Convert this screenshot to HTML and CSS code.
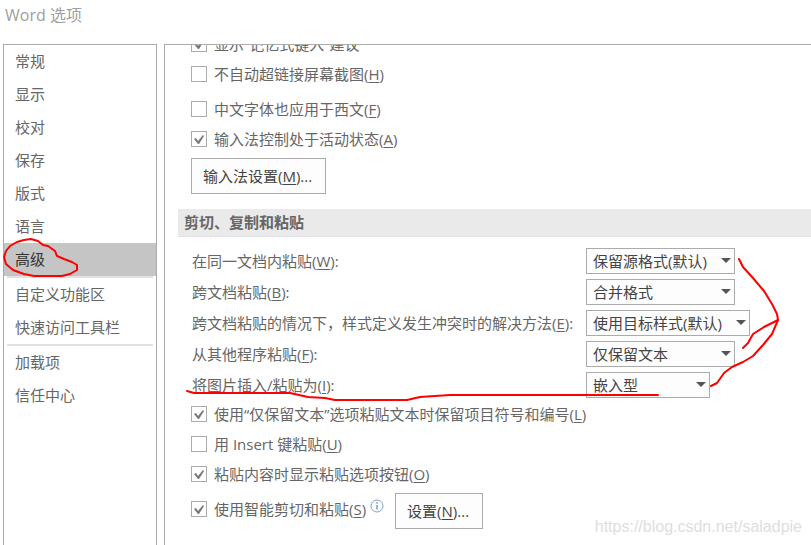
FILE: index.html
```
<!DOCTYPE html>
<html lang="zh-CN">
<head>
    <meta charset="UTF-8">
    <meta name="viewport" content="width=device-width, initial-scale=1.0">
    <title>Word 选项</title>
    <link rel="stylesheet" href="styles.css">
</head>
<body>

    <h1 class="title">Word 选项</h1>

    <div class="dialog">
        <nav class="sidebar">
            <button type="button" class="nav-item">常规</button>
            <button type="button" class="nav-item">显示</button>
            <button type="button" class="nav-item">校对</button>
            <button type="button" class="nav-item">保存</button>
            <button type="button" class="nav-item">版式</button>
            <button type="button" class="nav-item">语言</button>
            <button type="button" class="nav-item active">高级</button>
            <hr class="divider">
            <button type="button" class="nav-item">自定义功能区</button>
            <button type="button" class="nav-item">快速访问工具栏</button>
            <hr class="divider">
            <button type="button" class="nav-item">加载项</button>
            <button type="button" class="nav-item">信任中心</button>
        </nav>

        <main class="panel">
            <form class="options">
                <div class="group">
                    <label class="check"><input type="checkbox" checked><span>显示“记忆式键入”建议</span></label>
                    <label class="check"><input type="checkbox"><span>不自动超链接屏幕截图(<u>H</u>)</span></label>
                    <label class="check spaced"><input type="checkbox"><span>中文字体也应用于西文(<u>F</u>)</span></label>
                    <label class="check"><input type="checkbox" checked><span>输入法控制处于活动状态(<u>A</u>)</span></label>
                    <button type="button" class="btn">输入法设置(<u>M</u>)...</button>
                </div>

                <h2 class="section-title">剪切、复制和粘贴</h2>

                <div class="paste-grid">
                    <label for="same-doc">在同一文档内粘贴(<u>W</u>):</label>
                    <div class="select-box">
                        <select id="same-doc"><option>保留源格式(默认)</option></select>
                    </div>

                    <label for="cross-doc">跨文档粘贴(<u>B</u>):</label>
                    <div class="select-box">
                        <select id="cross-doc"><option>合并格式</option></select>
                    </div>

                    <label for="conflict">跨文档粘贴的情况下，样式定义发生冲突时的解决方法(<u>E</u>):</label>
                    <div class="select-box wide">
                        <select id="conflict"><option>使用目标样式(默认)</option></select>
                    </div>

                    <label for="other-app">从其他程序粘贴(<u>F</u>):</label>
                    <div class="select-box">
                        <select id="other-app"><option>仅保留文本</option></select>
                    </div>

                    <label for="picture">将图片插入/粘贴为(<u>I</u>):</label>
                    <div class="select-box narrow">
                        <select id="picture"><option>嵌入型</option></select>
                    </div>
                </div>

                <div class="group">
                    <label class="check"><input type="checkbox" checked><span>使用“仅保留文本”选项粘贴文本时保留项目符号和编号(<u>L</u>)</span></label>
                    <label class="check"><input type="checkbox"><span>用 Insert 键粘贴(<u>U</u>)</span></label>
                    <label class="check"><input type="checkbox" checked><span>粘贴内容时显示粘贴选项按钮(<u>O</u>)</span></label>
                    <div class="smart-row">
                        <label class="check"><input type="checkbox" checked><span>使用智能剪切和粘贴(<u>S</u>)</span></label>
                        <svg class="info" width="14" height="14" viewBox="0 0 14 14" aria-hidden="true">
                            <circle cx="7" cy="7" r="6" fill="none" stroke="#7f9fd0"/>
                            <path d="M7 6v4.5M7 3.3v1.4" stroke="#5580c0" stroke-width="1.2"/>
                        </svg>
                        <button type="button" class="btn">设置(<u>N</u>)...</button>
                    </div>
                </div>
            </form>
        </main>
    </div>

    <!-- red pen marks -->
    <svg class="marks" width="811" height="545" viewBox="0 0 811 545" aria-hidden="true">
        <path d="M38 241L31 239L24 240L17 242L10 246L6 251L4 257L6 264L13 270L24 274L34 276L62 276L70 274L77 270L77 265L72 262L64 259L57 256L55 251L48 246L43 245L38 241L31 239"/>
        <path d="M187 391L194 393L290 393L308 397L325 398L335 400L407 400L420 397L450 395L658 395"/>
        <path d="M739 259L743 267L753 278L764 291L772 304L777 314L778 320L764 327L753 334L748 343L743 348"/>
        <path d="M778 320L772 334L763 345L753 356L743 362L732 367L724 373L717 383L711 386"/>
    </svg>

    <div class="watermark">https://blog.csdn.net/saladpie</div>

</body>
</html>
```
FILE: styles.css
```
* {
    box-sizing: border-box;
}

body {
    margin: 0;
    height: 100vh;
    display: flex;
    flex-direction: column;
    overflow: hidden;
    background-color: white;
    color: #666;
    font-family: "Open Sans", "Noto Sans CJK SC", sans-serif;
    font-size: 15px;
    line-height: 20px;
}

button, select {
    font: inherit;
    color: #444;
}

u {
    text-underline-offset: 2px;
}

.title {
    margin: 0;
    padding: 5px 5px 19px;
    color: #a0a0a0;
    font-size: 16px;
    font-weight: normal;
}

.dialog {
    flex: 1;
    min-height: 0;
    display: flex;
    gap: 7px;
    padding-left: 3px;
}

.sidebar {
    width: 154px;
    flex-shrink: 0;
    border: 1px solid #ababab;
    border-bottom: none;
}

.nav-item {
    display: block;
    width: 100%;
    height: 33px;
    padding: 0 11px 2px;
    border: none;
    background: none;
    color: #666;
    text-align: left;
}

.nav-item.active {
    background-color: #c5c5c5;
    color: #333;
}

.divider {
    height: 2px;
    margin: 0 3px;
    border: none;
    background-color: #e1e1e1;
}

.panel {
    flex: 1;
    min-width: 0;
    overflow: hidden;
    border: 1px solid #ababab;
    border-right: none;
    border-bottom: none;
}

/* list is scrolled part of the way down */
.options {
    margin-top: -16px;
    padding-left: 13px;
    white-space: nowrap;
}

.group {
    padding-left: 13px;
}

.check {
    display: flex;
    align-items: center;
    gap: 7px;
    height: 30px;
}

.spaced {
    margin-top: 5px;
}

.check input {
    appearance: none;
    width: 16px;
    height: 16px;
    margin: 0;
    border: 1px solid #ababab;
    background-color: white;
}

.check input:checked::before {
    content: "";
    display: block;
    width: 14px;
    height: 14px;
    background-color: #777;
    clip-path: polygon(2px 7px, 4px 6px, 6px 9px, 11px 3px, 12px 4px, 7px 12px, 6px 12px);
}

.btn {
    height: 36px;
    margin-top: 4px;
    padding: 0 13px 0 11px;
    border: 1px solid #ababab;
    background-color: #fdfdfd;
}

.section-title {
    height: 28px;
    margin: 15px 0 11px;
    padding: 3px 6px;
    border-bottom: 1px solid #e1e1e8;
    background-color: #eaeaea;
    color: #666;
    font-size: 15px;
    font-weight: bold;
}

.paste-grid {
    display: grid;
    grid-template-columns: 394px 1fr;
    grid-auto-rows: 26px;
    row-gap: 5px;
    align-items: center;
    margin-bottom: 1px;
    padding-left: 14px;
}

.select-box {
    position: relative;
    width: 149px;
}

.select-box.wide {
    width: 164px;
}

.select-box.narrow {
    width: 124px;
}

.select-box select {
    appearance: none;
    display: block;
    width: 100%;
    height: 26px;
    padding: 0 6px;
    border: 1px solid #ababab;
    border-radius: 0;
    background-color: #fdfdfd;
}

.select-box::after {
    content: "";
    position: absolute;
    top: 10px;
    right: 4px;
    border: 5px solid transparent;
    border-top-color: #555;
    border-bottom: none;
    pointer-events: none;
}

.smart-row {
    display: flex;
    align-items: flex-start;
}

.smart-row .check {
    height: 40px;
}

.info {
    margin: 10px 11px 0 4px;
}

.marks {
    position: absolute;
    top: 0;
    left: 0;
    fill: none;
    stroke: #f00;
    stroke-width: 2;
    stroke-linejoin: round;
    stroke-linecap: round;
    pointer-events: none;
}

.watermark {
    position: absolute;
    right: 9px;
    bottom: 8px;
    color: #dedede;
    font-family: "Liberation Sans", Arial, sans-serif;
    font-size: 16px;
}
```
